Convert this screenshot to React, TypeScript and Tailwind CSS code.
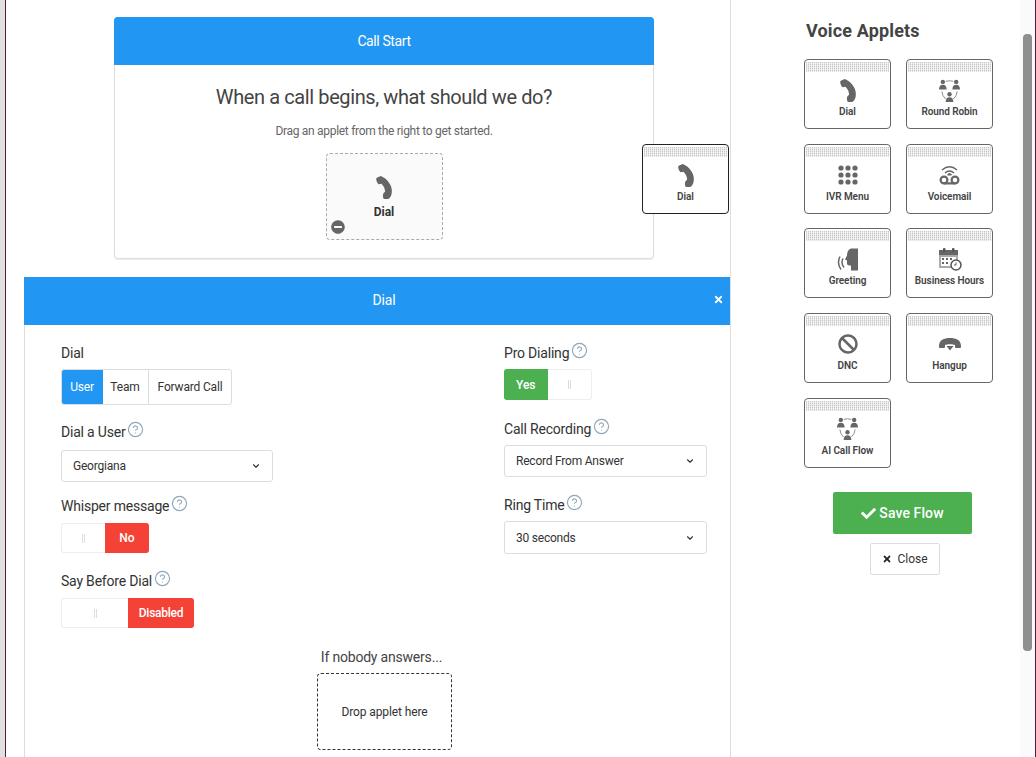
import { ChevronDown, CircleHelp, X } from 'lucide-react';
import { FaBan, FaCheck, FaMinusCircle, FaTimes } from 'react-icons/fa';

function DialIcon({ className }: { className: string }) {
  return (
    <svg viewBox="0 0 15 22" className={className} fill="#666">
      <path d="M1 1.5 L4.5 0 C10.5 2.5 15 8.5 15 14 C15 18 14 21 11 22 L8 22 C6.5 22 6 18.5 7 16.5 L8.5 15 C8.5 12 7.2 9.2 5 7.3 L2.4 8 C1 7 0 4.5 0 2.5 Z" />
    </svg>
  );
}

function PeopleIcon() {
  return (
    <svg viewBox="0 0 22 24" className="h-[23px] w-[21px]" fill="#666">
      <circle cx="4" cy="3" r="2.3" />
      <circle cx="18" cy="3" r="2.3" />
      <circle cx="11" cy="16" r="2.3" />
      <path d="M0 11 Q0 6 4 6 Q8 6 8 11 Z" />
      <path d="M14 11 Q14 6 18 6 Q22 6 22 11 Z" />
      <path d="M7 24 Q7 19 11 19 Q15 19 15 24 Z" />
      <path d="M7 2.5 Q11 1 15 2.5 M3 13 Q3.5 18 7 21 M19 13 Q18.5 18 15 21" fill="none" stroke="#888" strokeWidth="1" />
    </svg>
  );
}

function KeypadIcon() {
  return (
    <svg viewBox="0 0 20 20" className="h-[20px] w-[20px]" fill="#666">
      {[3, 10, 17].map((y) => [3, 10, 17].map((x) => <circle key={`${x}-${y}`} cx={x} cy={y} r="2.6" />))}
    </svg>
  );
}

function VoicemailIcon() {
  return (
    <svg viewBox="0 0 21 20" className="h-[20px] w-[21px]" fill="none" stroke="#666">
      <path d="M3 5 Q10.5 -1.5 18 5" strokeWidth="1.5" />
      <path d="M6 8 Q10.5 4 15 8" strokeWidth="1.5" />
      <path d="M8.5 10 L10.5 8 L12.5 10 Z" fill="#666" strokeWidth="1" />
      <circle cx="5" cy="15" r="3.4" strokeWidth="2.2" />
      <circle cx="16" cy="15" r="3.4" strokeWidth="2.2" />
      <path d="M5 18.4 H16" strokeWidth="2.2" />
    </svg>
  );
}

function GreetingIcon() {
  return (
    <svg viewBox="0 0 22 22" className="h-[23px] w-[22px]" fill="#666">
      <path d="M21 0 H14 C11 1 10 4 10 7 L8 11 L10 12 V15 C10 17 12 17 14 17 V22 H21 Z" />
      <path d="M6 10 Q3.5 14.5 7 19 M3 8 Q-0.5 14.5 4 21" fill="none" stroke="#666" strokeWidth="1.5" />
    </svg>
  );
}

function CalendarClockIcon() {
  return (
    <svg viewBox="0 0 24 24" className="h-[24px] w-[24px]">
      <rect x="1" y="4" width="19" height="17" fill="#aaa" />
      <rect x="1" y="3" width="19" height="5" fill="#666" />
      <rect x="5" y="1" width="2.5" height="4" rx="1" fill="#555" />
      <rect x="14" y="1" width="2.5" height="4" rx="1" fill="#555" />
      <rect x="3" y="10" width="15" height="9" fill="#fff" />
      <path d="M4 11h2v2H4zM8 11h2v2H8zM12 11h2v2h-2zM4 15h2v2H4zM8 15h2v2H8z" fill="#666" />
      <circle cx="18" cy="18" r="5" fill="#fff" stroke="#555" strokeWidth="1.5" />
      <path d="M18 15.5V18H16" fill="none" stroke="#555" strokeWidth="1" />
    </svg>
  );
}

function HangupIcon() {
  return (
    <svg viewBox="0 0 22 14" className="h-[14px] w-[22px]" fill="#666">
      <path d="M0 9 C0 3 5 1 11 1 C17 1 22 3 22 9 V10 Q22 11 21 11 H17 Q16 11 16 10 V8 C14 7 8 7 6 8 V10 Q6 11 5 11 H1 Q0 11 0 10 Z" />
      <path d="M7.5 9 H14.5 L11 13.5 Z" />
    </svg>
  );
}

function AppletCard({ label, icon, dark }: { label: string; icon: React.ReactNode; dark?: boolean }) {
  return (
    <div className={`flex h-[70px] w-[87px] flex-col overflow-hidden rounded-[4px] border bg-white ${dark ? 'border-[#222]' : 'border-[#666]'}`}>
      <div className="mx-px mt-[2px] h-[10px] shrink-0 bg-[repeating-linear-gradient(0deg,rgba(255,255,255,0.45)_0,rgba(255,255,255,0.45)_1px,transparent_1px,transparent_2px),repeating-linear-gradient(90deg,#c8c8c8_0,#c8c8c8_1px,#efefef_1px,#efefef_2px)]" />
      <div className="flex h-[30px] items-center justify-center pt-[6px]">{icon}</div>
      <div className="mt-[2px] text-center text-[10px] font-semibold leading-[16px] tracking-[-0.08px] text-[#444]">{label}</div>
    </div>
  );
}

function Help() {
  return <CircleHelp size={17} strokeWidth={1.6} className="ml-[2px] inline-block -translate-y-[3px] text-[#8fa6b8]" />;
}

function Label({ text, help }: { text: string; help?: boolean }) {
  return (
    <div className="flex items-center text-[14px] leading-[20px] tracking-[-0.2px] text-[#333]">
      {text}
      {help && <Help />}
    </div>
  );
}

function Select({ value, width, height }: { value: string; width: string; height: string }) {
  return (
    <div className={`flex items-center justify-between rounded-[3px] border border-[#ddd] bg-white pl-[11px] pr-[11px] text-[12px] tracking-[-0.22px] text-[#333] ${width} ${height}`}>
      {value}
      <ChevronDown size={10} strokeWidth={2.6} className="text-[#333]" />
    </div>
  );
}

function Grip() {
  return <div className="h-[9px] w-[3px] border-x border-[#ddd]" />;
}

const applets = [
  { label: 'Dial', icon: <DialIcon className="h-[23px] w-[16px]" /> },
  { label: 'Round Robin', icon: <PeopleIcon /> },
  { label: 'IVR Menu', icon: <KeypadIcon /> },
  { label: 'Voicemail', icon: <VoicemailIcon /> },
  { label: 'Greeting', icon: <GreetingIcon /> },
  { label: 'Business Hours', icon: <CalendarClockIcon /> },
  { label: 'DNC', icon: <FaBan size={20} color="#666" /> },
  { label: 'Hangup', icon: <HangupIcon /> },
  { label: 'AI Call Flow', icon: <PeopleIcon /> },
];

export default function App() {
  return (
    <div className="flex h-[757px] w-[1036px] overflow-hidden bg-white font-['Roboto',sans-serif] text-[#333]">
      <div className="w-[5px] shrink-0 bg-[#e0e0e0]" />
      <div className="w-px shrink-0 bg-[#5a1a3a]" />

      {/* Flow canvas */}
      <div className="relative w-[725px] shrink-0 border-r border-[#ddd] pl-[18px]">
        <div className="ml-[90px] mt-[17px] h-[242px] w-[540px] rounded-[4px] border border-[#ddd] bg-white shadow-[0_1px_1px_rgba(0,0,0,0.08)]">
          <div className="-mx-px -mt-px flex h-[48px] items-center justify-center rounded-t-[4px] bg-[#2196f3] text-[14px] tracking-[-0.4px] text-white">Call Start</div>
          <h2 className="mt-[18px] text-center text-[20px] leading-[28px] tracking-[-0.4px] text-[#444]">When a call begins, what should we do?</h2>
          <p className="mt-[11px] text-center text-[12px] leading-[18px] tracking-[-0.3px] text-[#666]">Drag an applet from the right to get started.</p>
          <div className="relative mx-auto mt-[13px] flex h-[87px] w-[117px] flex-col items-center rounded-[4px] border border-dashed border-[#aaa] bg-[#fafafa]">
            <DialIcon className="mt-[22px] h-[23px] w-[16px]" />
            <span className="mt-[5px] text-[12px] font-bold leading-[16px] text-[#333]">Dial</span>
            <FaMinusCircle size={14} color="#666" className="absolute bottom-[5px] left-[4px]" />
          </div>
        </div>

        <div className="absolute left-[636px] top-[144px]">
          <AppletCard label="Dial" dark icon={<DialIcon className="h-[23px] w-[16px]" />} />
        </div>

        {/* Dial panel */}
        <div className="mt-[18px] h-[480px] w-[706px] border-l border-[#ddd]">
          <div className="relative -ml-px flex h-[48px] items-center justify-center bg-[#2196f3] pb-[1px] pl-[14px] text-[14px] tracking-[-0.2px] text-white">
            Dial
            <X size={11} strokeWidth={4} className="absolute right-[6px] top-[17px]" />
          </div>

          <div className="flex pl-[36px] pt-[18px]">
            <div className="w-[443px]">
              <Label text="Dial" />
              <div className="mt-[6px] flex h-[36px] w-[171px] overflow-hidden rounded-[3px] border border-[#ddd] text-[12px] tracking-[-0.17px]">
                <div className="-m-px flex w-[42px] items-center justify-center bg-[#2196f3] text-white">User</div>
                <div className="flex w-[47px] items-center justify-center border-r border-[#ddd]">Team</div>
                <div className="flex flex-1 items-center justify-center">Forward Call</div>
              </div>

              <div className="mt-[17px]"><Label text="Dial a User" help /></div>
              <div className="mt-[8px]"><Select value="Georgiana" width="w-[212px]" height="h-[32px]" /></div>

              <div className="mt-[14px]"><Label text="Whisper message" help /></div>
              <div className="mt-[7px] flex h-[30px] w-[88px] rounded-[3px] border-y border-l border-[#eee] text-[12px] font-medium text-white">
                <div className="flex w-[43px] items-center justify-center"><Grip /></div>
                <div className="-my-px flex w-[44px] items-center justify-center rounded-r-[3px] bg-[#f44336]">No</div>
              </div>

              <div className="mt-[18px]"><Label text="Say Before Dial" help /></div>
              <div className="mt-[7px] flex h-[30px] w-[133px] rounded-[3px] border-y border-l border-[#eee] text-[12px] font-medium tracking-[-0.25px] text-white">
                <div className="flex w-[66px] items-center justify-center"><Grip /></div>
                <div className="-my-px flex w-[66px] items-center justify-center rounded-r-[3px] bg-[#f44336]">Disabled</div>
              </div>
            </div>

            <div>
              <Label text="Pro Dialing" help />
              <div className="mt-[6px] flex h-[31px] w-[88px] rounded-[3px] border-y border-r border-[#eee] text-[12px] font-medium text-white">
                <div className="-my-px flex w-[44px] items-center justify-center rounded-l-[3px] bg-[#4caf50]">Yes</div>
                <div className="flex w-[44px] items-center justify-center"><Grip /></div>
              </div>
              <div className="mt-[19px]"><Label text="Call Recording" help /></div>
              <div className="mt-[6px]"><Select value="Record From Answer" width="w-[203px]" height="h-[32px]" /></div>
              <div className="mt-[18px]"><Label text="Ring Time" help /></div>
              <div className="mt-[6px]"><Select value="30 seconds" width="w-[203px]" height="h-[33px]" /></div>
            </div>
          </div>

          <div className="mt-[19px] flex flex-col items-center pl-[14px]">
            <span className="mr-[6px] text-[14px] leading-[20px] tracking-[-0.2px] text-[#444]">If nobody answers...</span>
            <div className="mt-[6px] flex h-[77px] w-[135px] items-center justify-center rounded-[4px] border border-dashed border-[#333] text-[12px] tracking-[-0.12px]">Drop applet here</div>
          </div>
        </div>
      </div>

      {/* Applet sidebar */}
      <div className="w-[289px] shrink-0">
        <h3 className="ml-[75px] mt-[19px] text-[18px] font-bold leading-[24px] tracking-[0.15px] text-[#444]">Voice Applets</h3>
        <div className="ml-[73px] mt-[16px] grid w-[189px] grid-cols-2 gap-x-[15px] gap-y-[14.7px]">
          {applets.map((a) => (
            <AppletCard key={a.label} label={a.label} icon={a.icon} />
          ))}
        </div>
        <div className="ml-[102px] mt-[24px] flex h-[42px] w-[139px] items-center justify-center gap-[3px] rounded-[2px] bg-[#4caf50] pt-[1px] text-[14px] font-medium tracking-[0.1px] text-white">
          <FaCheck size={15} />
          Save Flow
        </div>
        <div className="ml-[139px] mt-[9px] flex h-[32px] w-[70px] items-center justify-center gap-[5px] rounded-[2px] border border-[#ddd] text-[12px] text-[#333]">
          <FaTimes size={10} color="#222" />
          Close
        </div>
      </div>

      {/* Scrollbar */}
      <div className="relative w-[15px] shrink-0 bg-[#fafafa]">
        <div className="absolute left-[3px] top-[34px] h-[617px] w-[9px] rounded-[4px] bg-[#8f8f8f]" />
      </div>
      <div className="w-px shrink-0 bg-[#5a1a3a]" />
    </div>
  );
}
